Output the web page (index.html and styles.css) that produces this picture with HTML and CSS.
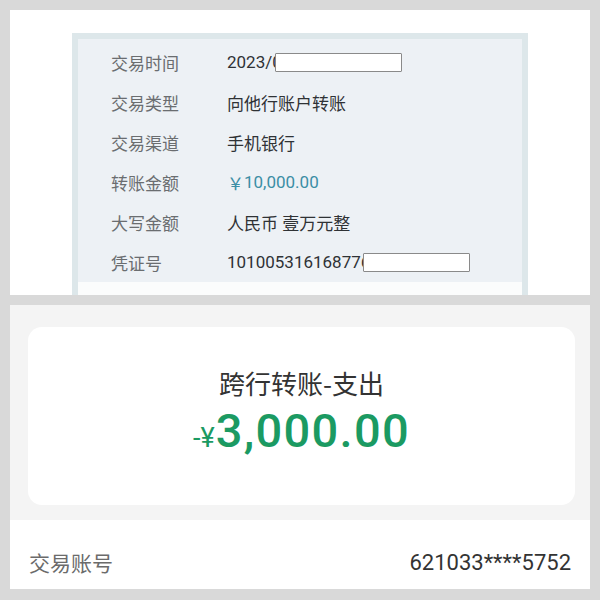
FILE: index.html
```html
<!DOCTYPE html>
<html lang="zh-CN">
<head>
<meta charset="utf-8">
<link rel="stylesheet" href="styles.css">
</head>
<body>
<div class="page">
  <section class="top">
    <div class="frame">
      <div class="inner">
        <div class="row"><span class="label">交易时间</span><span class="value">2023/0<span class="redact r1"></span></span></div>
        <div class="row"><span class="label">交易类型</span><span class="value">向他行账户转账</span></div>
        <div class="row"><span class="label">交易渠道</span><span class="value">手机银行</span></div>
        <div class="row"><span class="label">转账金额</span><span class="value amount"><span class="yen">￥</span>10,000.00</span></div>
        <div class="row"><span class="label">大写金额</span><span class="value">人民币 壹万元整</span></div>
        <div class="row"><span class="label">凭证号</span><span class="value">101005316168776<span class="redact r2"></span></span></div>
      </div>
      <div class="strip"></div>
    </div>
  </section>
  <section class="bottom">
    <div class="gray">
      <div class="card">
        <div class="title">跨行转账-支出</div>
        <div class="big"><span class="sym">-¥</span><span class="num">3,000.00</span></div>
      </div>
    </div>
    <div class="acct">
      <span class="acct-label">交易账号</span>
      <span class="acct-num">621033****5752</span>
    </div>
  </section>
</div>
</body>
</html>
```

FILE: styles.css
```css
* { box-sizing: border-box; }
html, body { margin: 0; padding: 0; }
body {
  background: #d9d9d9;
  font-family: "Roboto", "Noto Sans CJK SC", sans-serif;
  width: 600px;
  height: 600px;
  overflow: hidden;
}
.page { padding: 10px; }
.top {
  background: #fff;
  height: 285px;
  padding-top: 23px;
  display: flex;
  justify-content: center;
}
.frame {
  width: 456px;
  height: 262px;
  background: #dde7ea;
  padding: 6px 6px 0;
  display: flex;
  flex-direction: column;
}
.inner {
  background: #edf1f5;
  padding: 3px 0 0 33px;
  height: 243px;
}
.strip { background: #fbfcfc; flex: 1; }
.row {
  height: 40px;
  display: flex;
  align-items: center;
  font-size: 17px;
}
.label {
  width: 116px;
  color: #6a6d70;
  font-family: "Noto Sans CJK SC", sans-serif;
}
.value {
  color: #2f3235;
  font-family: "Roboto", "Noto Sans CJK SC", sans-serif;
  display: flex;
  align-items: center;
}
.amount { color: #3b8ea5; }
.yen { font-family: "Noto Sans CJK SC", sans-serif; }
.redact {
  display: inline-block;
  background: #fff;
  border: 1px solid #8a8a8a;
  border-radius: 1px;
  height: 19px;
}
.r1 { width: 127px; margin-left: -7px; }
.r2 { width: 107px; margin-left: -7px; }

.bottom {
  margin-top: 10px;
  background: #fff;
  height: 284px;
}
.gray {
  background: #f4f4f4;
  height: 215px;
  padding: 22px 15px 0 18px;
}
.card {
  background: #fff;
  border-radius: 14px;
  height: 178px;
  display: flex;
  flex-direction: column;
  align-items: center;
  padding-top: 37px;
}
.title {
  font-family: "Noto Sans CJK SC", sans-serif;
  font-size: 26px;
  color: #333;
  line-height: 38px;
}
.big {
  color: #1b9a62;
  line-height: 54px;
  margin-top: 2px;
  display: flex;
  align-items: baseline;
}
.sym { font-size: 27px; margin-right: 1px; }
.num { font-size: 47px; font-weight: 500; letter-spacing: 1.3px; }
.acct {
  height: 69px;
  display: flex;
  justify-content: space-between;
  align-items: center;
  padding: 15px 19px 0 19px;
}
.acct-label {
  font-family: "Noto Sans CJK SC", sans-serif;
  font-size: 21px;
  color: #6b6b6b;
}
.acct-num {
  font-size: 22px;
  color: #333;
}
```
